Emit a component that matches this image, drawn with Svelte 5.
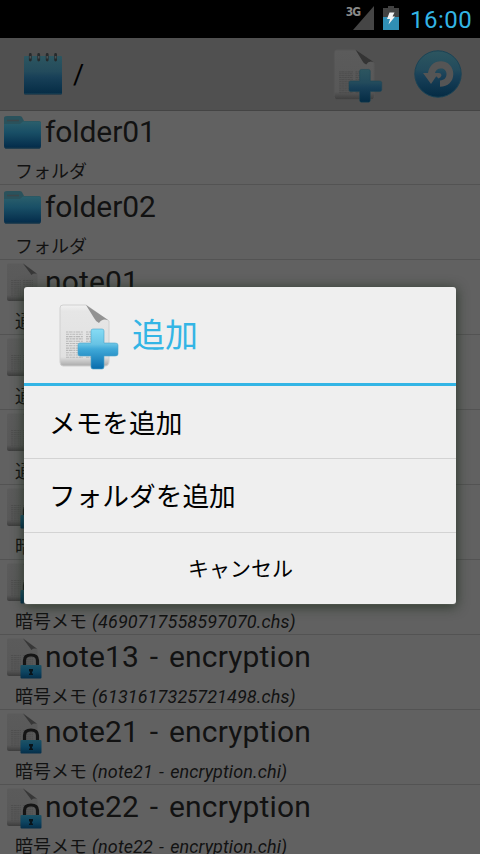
<script>
  const rows = [
    { icon: 'folder', title: 'folder01', kind: 'フォルダ' },
    { icon: 'folder', title: 'folder02', kind: 'フォルダ' },
    { icon: 'note', title: 'note01', kind: '通常メモ' },
    { icon: 'note', title: 'note02', kind: '通常メモ' },
    { icon: 'note', title: 'note03', kind: '通常メモ' },
    { icon: 'lock', title: 'note11', kind: '暗号メモ' },
    { icon: 'lock', title: 'note12', kind: '暗号メモ', file: '(4690717558597070.chs)' },
    { icon: 'lock', title: 'note13 - encryption', kind: '暗号メモ', file: '(6131617325721498.chs)' },
    { icon: 'lock', title: 'note21 - encryption', kind: '暗号メモ', file: '(note21 - encryption.chi)' },
    { icon: 'lock', title: 'note22 - encryption', kind: '暗号メモ', file: '(note22 - encryption.chi)' }
  ];
  const options = ['メモを追加', 'フォルダを追加'];
</script>

<svg class="defs" width="0" height="0">
  <defs>
    <linearGradient id="plusBright" x1="0" y1="0" x2="0" y2="1">
      <stop offset="0" stop-color="#86dcf5" /><stop offset=".38" stop-color="#68c3e4" />
      <stop offset=".5" stop-color="#40a9d8" /><stop offset="1" stop-color="#086cac" />
    </linearGradient>
    <linearGradient id="plusDim" x1="0" y1="0" x2="0" y2="1">
      <stop offset="0" stop-color="#2d5660" /><stop offset=".4" stop-color="#234b5c" />
      <stop offset=".55" stop-color="#184058" /><stop offset="1" stop-color="#042b44" />
    </linearGradient>
    <linearGradient id="folderFill" x1="0" y1="0" x2="0" y2="1">
      <stop offset="0" stop-color="#2b5f6c" /><stop offset=".4" stop-color="#194f66" />
      <stop offset="1" stop-color="#032a49" />
    </linearGradient>
    <linearGradient id="pageBright" x1="0" y1="0" x2="0" y2="1">
      <stop offset="0" stop-color="#f1f1f1" /><stop offset=".1" stop-color="#e6e6e6" />
      <stop offset=".85" stop-color="#e1e1e1" /><stop offset="1" stop-color="#aaa" />
    </linearGradient>
    <linearGradient id="pageDim" x1="0" y1="0" x2="0" y2="1">
      <stop offset="0" stop-color="#5b5b5b" /><stop offset=".84" stop-color="#585858" />
      <stop offset="1" stop-color="#3d3d3d" />
    </linearGradient>
    <linearGradient id="lockFill" x1="0" y1="0" x2="0" y2="1">
      <stop offset="0" stop-color="#1d5265" /><stop offset=".5" stop-color="#0e4561" />
      <stop offset="1" stop-color="#052e49" />
    </linearGradient>
  </defs>
</svg>

{#snippet addIcon(dim)}
  <svg class:dim class="add" viewBox="0 0 60 66">
    <path d="M4 1H27L50 17V57Q50 62 46 62H4Q1 62 1 58V4Q1 1 4 1Z"
      fill={dim ? 'url(#pageDim)' : 'url(#pageBright)'} stroke={dim ? '#555' : '#d0d0d0'} />
    <path d="M27 1L49 16Q43 14 40 19Q37 18 35 14Z" fill={dim ? '#343434' : '#929292'} />
    <g stroke={dim ? '#4b4b4b' : '#b8b8b8'} stroke-width="1.1" fill="none">
      {#each Array(12) as _, i}
        <path d={`M7 ${28 + i * 2.3}H24 M27 ${28 + i * 2.3}H42`} stroke-dasharray={i % 2 ? '3 .7 2 .6' : '2 .6 4 .8'} />
      {/each}
    </g>
    <path d="M34 25H43Q45 25 45 27V39H56Q59 39 59 41V50Q59 52 56 52H45V63Q45 65 43 65H34Q32 65 32 63V52H21Q19 52 19 50V41Q19 39 21 39H32V27Q32 25 34 25Z"
      fill={dim ? 'url(#plusDim)' : 'url(#plusBright)'} stroke={dim ? '#1b4555' : '#4fa6ca'} stroke-width=".6" />
  </svg>
{/snippet}

{#snippet pageIcon(locked)}
  <svg class="row-icon" viewBox="0 0 45 45">
    <path d="M8 3.5H24L37.500 14V39Q37.500 41 36 41H9Q7 41 7 39V5Q7 3.500 8 3.500Z" fill="url(#pageDim)" />
    <path d="M23 3.500L37 13.800Q33 13 31.500 15Z" fill="#373737" />
    <g stroke="#4e4e4e" stroke-width=".9">
      {#each Array(8) as _, i}
        <path d={`M11 ${20.500 + i * 2.100}H21M23 ${20.500 + i * 2.100}H33`} stroke-dasharray="2 .7 3 .6" />
      {/each}
    </g>
    {#if locked}
      <path d="M24.500 31V25.500Q24.500 20 31 20T37.500 25.500V31" fill="none" stroke="#151515" stroke-width="3.200" />
      <rect x="20.500" y="30" width="21" height="13.500" rx="1" fill="url(#lockFill)" />
      <path d="M29 34H33V36L32 37V38L33 39V40H29V39L30 38V37L29 36Z" fill="#08131a" />
    {/if}
  </svg>
{/snippet}

<div class="screen">
  <div class="status">
    <span class="net">3G</span>
    <svg class="signal" width="21" height="24" viewBox="0 0 21 24"><path d="M21 0V24H0Z" fill="#454545" /></svg>
    <svg class="battery" width="16" height="24" viewBox="0 0 16 24">
      <path d="M5 0H11V2H16V12H0V2H5Z" fill="#424242" />
      <path d="M0 11H16V24H0Z" fill="#308fb5" />
      <path d="M6.500 6.500H11.500L9.500 10.500H12L5.500 18.500L7 13H4Z" fill="#f4f4f4" />
    </svg>
    <span class="clock">16:00</span>
  </div>

  <header>
    <svg class="pad" width="40" height="44" viewBox="0 0 40 44">
      <rect x="1" y="4" width="38" height="38.500" rx="1" fill="url(#plusDim)" />
      <path d="M1 41.500H39" stroke="#12394e" />
      <g stroke="#252a2c" stroke-width="2.800" stroke-linecap="round">
        <path d="M7.300 2.500V8M15.700 2.500V8M24.200 2.500V8M32.600 2.500V8" />
      </g>
      <g stroke="#4a5153" stroke-width="1.600"><path d="M7.300 4V6.500M15.700 4V6.500M24.200 4V6.500M32.600 4V6.500" /></g>
    </svg>
    <span class="path">/</span>
    {@render addIcon(true)}
    <svg class="undo" width="48" height="48" viewBox="0 0 48 48">
      <circle cx="24" cy="24" r="23.200" fill="url(#plusDim)" stroke="#1b4355" />
      <path d="M9 23H14C15 16 20 11.300 27 11.300C34 11.300 39.300 16.800 39.300 24C39.300 31.500 34 36.700 26 36.700V30.500C30.500 30 32.500 27.500 32.500 24C32.500 20.500 30 18.500 27 18.500C23.700 18.500 21.500 20.500 21 23H24.500L17 34ZM24.500 23Q27.500 22.500 27.500 25.500Q27 27.500 24.500 28.500L22 26Z" fill="#555" />
    </svg>
  </header>

  <main>
    {#each rows as row}
      <div class="row">
        <div class="top">
          {#if row.icon === 'folder'}
            <svg class="row-icon" viewBox="0 0 45 45">
              <path d="M4 8Q4 6 7 6H20Q22 6 23 9L24 11H39Q41 11 41 13V20H4Z" fill="#2a525c" />
              <path d="M7 10.500H19" stroke="#3b464a" stroke-width="1.500" />
              <path d="M4 14H20L23 11.500H39Q41 11.500 41 13V36Q41 38.500 39 38.500H6Q4 38.500 4 36Z" fill="url(#folderFill)" />
              <path d="M5 38H40" stroke="#16394b" />
            </svg>
          {:else}
            {@render pageIcon(row.icon === 'lock')}
          {/if}
          <span class="title" class:short={row.icon === 'folder'}>{row.title}</span>
        </div>
        <div class="sub"><span>{row.kind}</span>{#if row.file}<i>{row.file}</i>{/if}</div>
      </div>
    {/each}
  </main>

  <div class="dialog">
    <div class="head">
      {@render addIcon(false)}
      <span>追加</span>
    </div>
    {#each options as option}
      <div class="option">{option}</div>
    {/each}
    <div class="cancel">キャンセル</div>
  </div>
</div>

<style>
  :global(body) { margin: 0; background: #616161; overflow: hidden; }
  .defs { position: absolute; }
  svg { display: block; flex: none; }
  .screen {
    position: relative; width: 480px; height: 854px; overflow: hidden;
    display: flex; flex-direction: column; background: #616161;
    font-family: Roboto, "Noto Sans CJK JP", sans-serif; color: #121212;
  }
  .status { flex: none; height: 38px; background: #000; display: flex; box-sizing: border-box; padding: 6px 8px 0 0; justify-content: flex-end; }
  .net { font: 700 12px/13px "DejaVu Sans Condensed", "Open Sans", sans-serif; letter-spacing: -1px; color: #898989; margin-right: -7px; }
  .signal { margin-right: 9px; }
  .battery { margin-right: 11px; }
  .clock { font-size: 24px; line-height: 28px; color: #33b5e5; width: 62px; white-space: nowrap; letter-spacing: .5px; }
  header { flex: none; height: 73px; box-sizing: border-box; background: #505050; border-bottom: 1px solid #444; display: flex; align-items: flex-start; padding-left: 23px; }
  .pad { margin-top: 14px; }
  .path { color: #000; font-size: 27px; line-height: 32px; margin: 21px 0 0 10px; width: 260px; }
  .add { width: 60px; height: 66px; }
  .add.dim { width: 50px; height: 54px; margin-top: 11px; }
  .undo { margin: 12px 0 0 31px; }
  main { flex: none; margin-top: -1px; }
  .row { height: 75px; box-sizing: border-box; border-bottom: 1px solid #535353; overflow: hidden; }
  .top { display: flex; height: 45px; }
  .row-icon { width: 45px; height: 45px; }
  .title { font-size: 30px; line-height: 43px; letter-spacing: .15px; word-spacing: 3.2px; white-space: nowrap; }
  .title.short { letter-spacing: -.1px; }
  .sub { display: flex; gap: 5px; padding: 4px 0 0 15px; font-size: 18px; line-height: 26px; white-space: nowrap; }
  .sub i { letter-spacing: .11px; word-spacing: 1.6px; }
  .dialog { position: absolute; left: 24px; top: 287px; width: 432px; height: 317px; border-radius: 3px; background: #efefef; box-shadow: 0 2px 12px 1px rgba(22, 38, 20, .65), 0 1px 1px #777; color: #000; }
  .head { height: 79px; border-bottom: 3px solid #33b5e5; display: flex; align-items: flex-start; padding: 17px 0 0 35px; }
  .head span { color: #33b5e5; font-size: 33px; line-height: 40px; margin: 12px 0 0 13px; }
  .option { height: 73px; box-sizing: border-box; border-bottom: 1px solid #d3d3d3; padding-left: 25px; font-size: 26.700px; line-height: 76px; }
  .option + .option { height: 74px; }
  .cancel { text-align: center; font-size: 21px; line-height: 72px; padding-left: 1px; }
</style>
